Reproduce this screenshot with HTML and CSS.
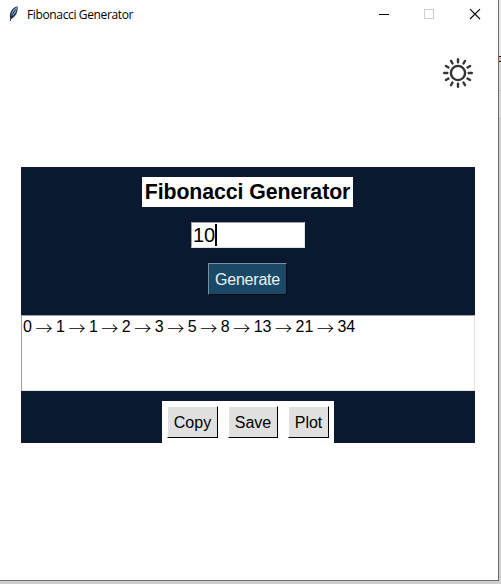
FILE: index.html
```html
<!DOCTYPE html>
<html lang="en">
<head>
<meta charset="utf-8">
<title>Fibonacci Generator</title>
<link rel="stylesheet" href="styles.css">
</head>
<body>
<div class="window">
  <header class="titlebar">
    <svg class="feather" width="12" height="18" viewBox="0 0 12 18">
      <path d="M2.300 14C.8 9 3 3 9.500 1.200 10.500 6 8 11.500 3 14Z" fill="#26384f"/>
      <path d="M3.300 11.500C3.300 7 5.500 4 9 2.100 9 6.500 6.500 10 3.300 11.500Z" fill="#7ba6d4"/>
      <path d="M7.500 4.500 4 10 2.300 16" fill="none" stroke="#182030" stroke-width=".9"/>
    </svg>
    <span class="caption">Fibonacci Generator</span>
    <svg class="controls" width="106" height="14" viewBox="0 0 106 14" fill="none">
      <path d="M0 7.500h10" stroke="#000"/>
      <rect x="45.500" y="2.500" width="9" height="9" stroke="#ccc"/>
      <path d="M91 2.200 101 12M101 2.200 91 12" stroke="#000" stroke-width="1.100"/>
    </svg>
  </header>
  <div class="toolbar">
    <svg width="32" height="32" viewBox="-16 -16 32 32" fill="none" stroke="#343434" stroke-width="2.400" stroke-linecap="round">
      <circle r="7.100"/>
      <path d="M0-10.700V-13.800M0 10.700V13.800M10.700 0H13.800M-10.700 0H-13.800M5.500-9.500 7-12.100M9.500-5.500 12.100-7M9.500 5.500 12.100 7M5.500 9.500 7 12.100M-5.500 9.500-7 12.100M-9.500 5.500-12.100 7M-9.500-5.500-12.100-7M-5.500-9.500-7-12.100"/>
    </svg>
  </div>
  <main class="panel">
    <h1 class="heading">Fibonacci Generator</h1>
    <div class="entry"><span class="value">10</span></div>
    <button class="btn generate">Generate</button>
    <div class="output">0 <i>→</i> 1 <i>→</i> 1 <i>→</i> 2 <i>→</i> 3 <i>→</i> 5 <i>→</i> 8 <i>→</i> 13 <i>→</i> 21 <i>→</i> 34</div>
    <div class="actions">
      <button class="btn copy">Copy</button>
      <button class="btn save">Save</button>
      <button class="btn plot">Plot</button>
    </div>
  </main>
</div>
<div class="backdrop"></div>
</body>
</html>
```
FILE: styles.css
```css
* { box-sizing: border-box; }
body {
  margin: 0;
  height: 584px;
  display: flex;
  overflow: hidden;
  background: #cfcfcf;
  font-family: "Liberation Sans", Arial, sans-serif;
  color: #000;
}
.window {
  width: 499px;
  height: 581px;
  flex: none;
  background: #fefefe;
  border-right: 1px solid #6c6c6c;
  border-bottom: 1px solid #6c6c6c;
}
.backdrop {
  flex: 1;
  height: 581px;
  background: linear-gradient(#e8e8e8 0 56px, #222 56px 57px, #d8b9a8 57px 61px, #222 61px 62px, #dadada 62px 90px, #c4c4c4 90px 91px, #dadada 91px 118px, #c4c4c4 118px 119px, #cfcfcf 119px);
}
.titlebar {
  height: 30px;
  display: flex;
  align-items: center;
  padding: 0 18px 0 8px;
}
.feather { margin-right: 7px; margin-top: -2px; }
.caption {
  font: 12px/16px "Open Sans", sans-serif;
  letter-spacing: -0.360px;
  white-space: nowrap;
}
.controls { margin-left: auto; margin-right: -5px; margin-top: -2px; }
.toolbar {
  height: 137px;
  display: flex;
  justify-content: flex-end;
  padding: 27px 24px 0 0;
}
.panel {
  margin-left: 21px;
  width: 454px;
  height: 276px;
  padding-top: 10px;
  background: #0a192f;
  display: flex;
  flex-direction: column;
  align-items: center;
}
.heading {
  margin: 0 1px 0 0;
  width: 211px;
  height: 30px;
  background: #fff;
  font-size: 21.300px;
  letter-spacing: -0.080px;
  line-height: 30px;
  text-align: center;
  white-space: nowrap;
}
.entry {
  width: 114px;
  height: 26px;
  margin: 15px 0;
  padding: 1px;
  background: #fff;
  border: 1px solid #e3e3e3;
  border-top-color: #a0a0a0;
  border-left-color: #a0a0a0;
}
.value {
  display: inline-block;
  height: 22px;
  font-size: 20px;
  line-height: 23px;
  border-right: 2px solid #000;
}
.btn {
  padding: 1px 0 0;
  font: 16px/29px "Liberation Sans", Arial, sans-serif;
  white-space: nowrap;
}
.generate {
  width: 79px;
  height: 32px;
  margin-right: 1px;
  letter-spacing: -0.200px;
  background: #1b4965;
  color: #e9f2f8;
  border: 1px solid #7592a5;
  border-right: 1px solid #050a12;
  border-bottom: 1px solid #050a12;
}
.output {
  width: 454px;
  height: 76px;
  margin: 20px 0 10px;
  padding: 2px 1px 1px;
  background: #fff;
  border: 1px solid #e3e3e3;
  border-top-color: #a0a0a0;
  border-left-color: #a0a0a0;
  font-size: 16px;
  line-height: 18px;
  word-spacing: -0.420px;
  white-space: nowrap;
}
.output i {
  display: inline-block;
  width: 16px;
  height: 18px;
  vertical-align: top;
  font: 300 17px/20px "Noto Sans CJK JP", sans-serif;
  text-indent: -0.500px;
}
.actions {
  width: 172px;
  height: 42px;
  padding: 5px;
  display: flex;
  justify-content: space-between;
  background: #fff;
}
.actions .btn {
  height: 32px;
  background: #e0e0e0;
  border: 1px solid #fff;
  border-right-color: #000;
  border-bottom-color: #000;
}
.copy { width: 51px; }
.save { width: 50px; }
.plot { width: 41px; }
```
